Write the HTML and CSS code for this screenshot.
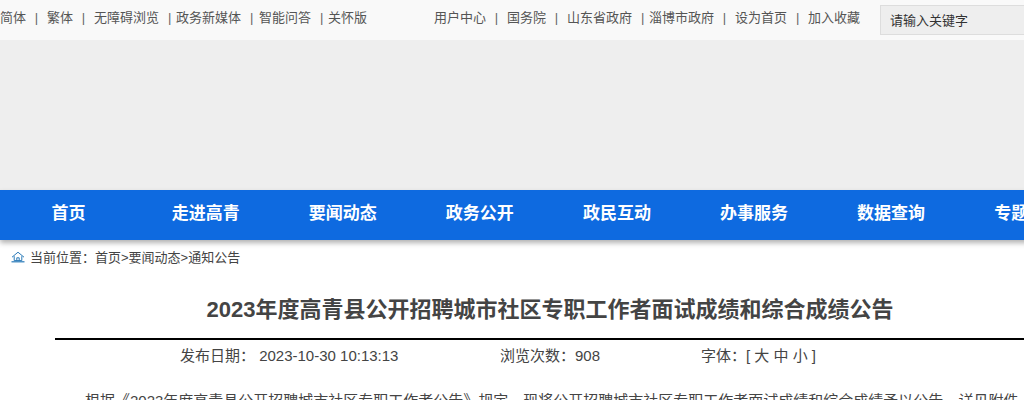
FILE: index.html
```html
<!DOCTYPE html>
<html lang="zh-CN">
<head>
<meta charset="utf-8">
<title>2023年度高青县公开招聘城市社区专职工作者面试成绩和综合成绩公告</title>
<link rel="stylesheet" href="styles.css">
</head>
<body>
<div class="page">
  <header class="topbar">
    <nav class="links links-left">
      <a>简体</a><span class="sep">|</span>
      <a>繁体</a><span class="sep">|</span>
      <a>无障碍浏览</a><span class="sep sep-tight">|</span>
      <a>政务新媒体</a><span class="sep sep-mid">|</span>
      <a>智能问答</a><span class="sep sep-tight">|</span>
      <a>关怀版</a>
    </nav>
    <nav class="links links-right">
      <a>用户中心</a><span class="sep">|</span>
      <a>国务院</a><span class="sep">|</span>
      <a>山东省政府</a><span class="sep sep-tight">|</span>
      <a>淄博市政府</a><span class="sep">|</span>
      <a>设为首页</a><span class="sep">|</span>
      <a>加入收藏</a>
    </nav>
    <div class="search">请输入关键字</div>
  </header>
  <div class="banner"></div>
  <nav class="mainnav">
    <a>首页</a><a>走进高青</a><a>要闻动态</a><a>政务公开</a><a>政民互动</a><a>办事服务</a><a>数据查询</a><a>专题专栏</a>
  </nav>
  <div class="crumb">
    <svg class="home" width="14" height="12" viewBox="0 0 14 12"><path d="M1 6.2 7 1.2l6 5M3.2 5.2V9.6h7.6V5.2M5.8 9.6V6.8h2.4v2.8" fill="none" stroke="#2a7ab8" stroke-width="1"/><path d="M0.5 10.8h13" stroke="#2a7ab8" stroke-width="1.2"/></svg>
    <span>当前位置：首页&gt;要闻动态&gt;通知公告</span>
  </div>
  <main class="article">
    <h1 class="title">2023年度高青县公开招聘城市社区专职工作者面试成绩和综合成绩公告</h1>
    <div class="meta">
      <span class="meta-date">发布日期：&nbsp;2023-10-30 10:13:13</span>
      <span class="meta-views">浏览次数：908</span>
      <span class="meta-font">字体：[ 大 中 小 ]</span>
    </div>
    <p class="content">根据《2023年度高青县公开招聘城市社区专职工作者公告》规定，现将公开招聘城市社区专职工作者面试成绩和综合成绩予以公告，详见附件。</p>
  </main>
</div>
</body>
</html>
```
FILE: styles.css
```css
html, body { margin: 0; padding: 0; height: 400px; overflow: hidden; background: #fff; }
body { font-family: "Liberation Sans", "Noto Sans CJK SC", sans-serif; color: #333; }
.page { width: 1200px; }
.topbar { display: flex; height: 40px; background: #f9f9f9; font-size: 13px; line-height: 36px; color: #555; }
.links { display: flex; white-space: nowrap; }
.links-left { width: 434px; }
.links-right { width: 446px; }
.sep { width: 21px; text-align: center; color: #666; }
.sep-tight { width: 17px; text-align: left; padding-left: 9px; box-sizing: border-box; }
.sep-mid { width: 18px; text-align: left; padding-left: 9px; box-sizing: border-box; }
.search { width: 300px; height: 30px; margin-top: 5px; box-sizing: border-box; background: #eee; border: 1px solid #ddd; padding-left: 9px; line-height: 29px; color: #333; }
.banner { height: 150px; background: #eee; }
.mainnav { display: flex; height: 50px; background: #0e6ae0; box-shadow: 0 3px 5px rgba(0,0,0,.3); position: relative; }
.mainnav a { flex: 0 0 137.1px; text-align: center; line-height: 48px; font-size: 17px; font-weight: bold; color: #fff; white-space: nowrap; }
.crumb { display: flex; align-items: center; height: 34px; padding: 0 0 1px 11px; box-sizing: border-box; font-size: 13px; color: #444; }
.home { margin-right: 5px; }
.article { padding-left: 55px; width: 990px; }
.title { margin: 0; height: 64px; line-height: 72px; font-size: 22px; font-weight: bold; color: #444; text-align: center; border-bottom: 2px solid #000; }
.meta { display: flex; height: 31px; line-height: 32px; font-size: 15px; color: #444; padding-left: 125px; white-space: nowrap; }
.meta-date { width: 320px; }
.meta-views { width: 201px; }
.content { margin: 17px 0 0; font-size: 15px; line-height: 26px; text-indent: 30px; color: #444; width: 1100px; }
```
